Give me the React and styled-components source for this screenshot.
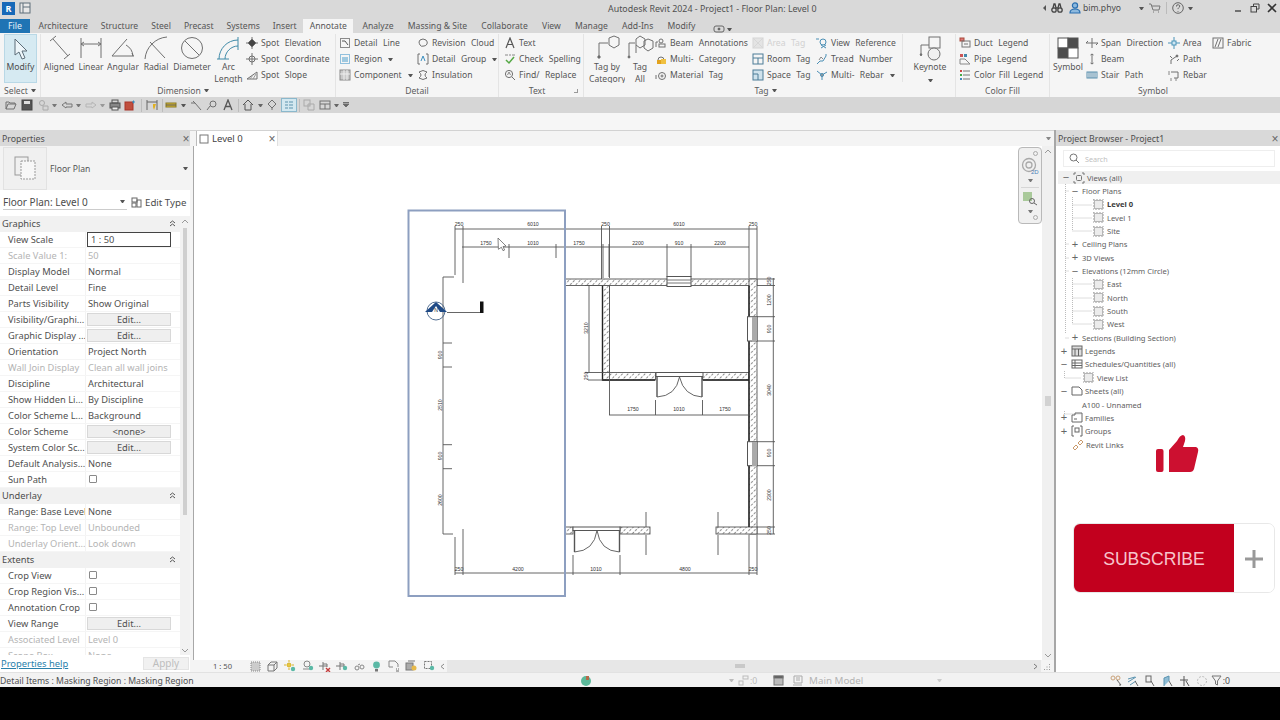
import React from 'react';
import styled, { createGlobalStyle } from 'styled-components';

const GlobalStyle = createGlobalStyle`
  html, body { margin: 0; padding: 0; background: #000; overflow: hidden; }
  * { box-sizing: border-box; }
`;

const Page = styled.div`
  width: 1280px;
  height: 720px;
  display: flex;
  flex-direction: column;
  overflow: hidden;
  font-family: "Noto Sans", "Open Sans", sans-serif;
  font-size: 10px;
  color: #4c4c4c;
  background: #000;
`;

// fixed width cell for the icon strips
const Slot = styled.span`
  flex: 0 0 ${p => p.$w}px;
  width: ${p => p.$w}px;
  display: flex;
  align-items: center;
  justify-content: ${p => p.$left ? 'flex-start' : 'center'};
  white-space: nowrap;
  color: ${p => p.$color || 'inherit'};
  font-size: ${p => p.$fs ? `${p.$fs}px` : 'inherit'};
`;

const Caret = styled.span`
  display: inline-block;
  flex: 0 0 auto;
  width: 5px;
  height: 3px;
  margin-left: ${p => p.$ml ?? 3}px;
  border-left: 2.5px solid transparent;
  border-right: 2.5px solid transparent;
  border-top: 3px solid ${p => p.$color || '#555'};
`;

/* title bar */
const TitleBar = styled.div`
  height: 16px;
  background: #d9d9d9;
  display: flex;
  align-items: center;
`;
const Logo = styled.span`
  width: 13px;
  height: 13px;
  margin-left: 2px;
  background: #1769b8;
  color: #fff;
  font-size: 9px;
  font-weight: 700;
  line-height: 13px;
  text-align: center;
`;
const TitleLeft = styled.div`
  flex: 0 0 608px;
  display: flex;
  align-items: center;
  gap: 4px;
`;
const TitleText = styled.div`
  flex: 0 0 432px;
  font-size: 8.9px;
  color: #505050;
`;

/* tabs */
const TabBar = styled.div`
  height: 17px;
  background: #d9d9d9;
  display: flex;
  align-items: flex-end;
`;
const FileTab = styled.div`
  width: 30px;
  height: 14px;
  margin-right: 2px;
  background: #1f74b4;
  color: #e8f2fa;
  text-align: center;
  line-height: 14px;
  font-size: 8.8px;
`;
const Tab = styled.div`
  height: 14px;
  padding: 0 ${p => p.$wide ? 7.1 : 6.5}px;
  margin-right: ${p => p.$active ? 2 : 0}px;
  line-height: 14px;
  font-size: 8.6px;
  white-space: nowrap;
  background: ${p => p.$active ? '#f5f5f5' : 'transparent'};
  color: #555;
`;

/* ribbon */
const Ribbon = styled.div`
  height: 64px;
  background: #f5f5f5;
  display: flex;
  padding-top: 1px;
  font-size: 8.6px;
  word-spacing: 3.2px;
`;
const Panel = styled.div`
  flex: 0 0 ${p => p.$w}px;
  display: flex;
  flex-direction: column;
  border-right: ${p => p.$last ? 'none' : '1px solid #e4e4e4'};
`;
const PanelBody = styled.div`
  height: 50px;
  display: flex;
  padding-left: ${p => p.$pl || 0}px;
`;
const PanelLabel = styled.div`
  height: 13px;
  display: flex;
  align-items: center;
  justify-content: center;
  padding-right: ${p => p.$pr || 0}px;
  color: #5c5c5c;
  word-spacing: 0;
  position: relative;
`;
const Launcher = styled.span`
  position: absolute;
  right: 5px;
  top: 5px;
  width: 4px;
  height: 4px;
  border-right: 1px solid #999;
  border-bottom: 1px solid #999;
`;
const ModifyButton = styled.div`
  width: 33px;
  height: 49px;
  margin-left: 4px;
  background: #d6eaf2;
  border: 1px solid #b9d8e6;
  display: flex;
  flex-direction: column;
  align-items: center;
  padding-top: 2px;
`;
const BigIcon = styled.div`
  height: 27px;
  display: flex;
  align-items: center;
  justify-content: center;
`;
const BigButton = styled.div`
  flex: 0 0 ${p => p.$w}px;
  height: 49px;
  overflow: hidden;
  text-align: center;
  line-height: 12px;
  color: #555;
  word-spacing: 0;
`;
const SmallCol = styled.div`
  flex: 0 0 ${p => p.$w}px;
  display: flex;
  flex-direction: column;
  padding-top: 1px;
`;
const SmallTool = styled.div`
  height: 16px;
  display: flex;
  align-items: center;
  gap: 3px;
  white-space: nowrap;
  color: ${p => p.$off ? '#c9c9c9' : '#555'};
  opacity: ${p => p.$off ? 0.8 : 1};
  word-spacing: ${p => p.$tight ? '1px' : 'inherit'};
`;
const Divider = styled.div`
  width: 1px;
  height: 48px;
  background: #e4e4e4;
  margin: 0 2px;
`;

/* quick access toolbar */
const Qat = styled.div`
  height: 16px;
  background: #d6d6d6;
  display: flex;
  align-items: center;
`;
const QatItem = styled.span`
  flex: 0 0 auto;
  width: ${p => p.$w}px;
  height: 14px;
  margin-left: ${p => p.$ml}px;
  display: flex;
  align-items: center;
  justify-content: center;
  background: ${p => p.$active ? '#d3e8f0' : 'transparent'};
  border: ${p => p.$active ? '1px solid #8bb8cc' : 'none'};
`;
const QatSep = styled.span`
  flex: 0 0 1px;
  height: 13px;
  background: #bdbdbd;
  margin-left: ${p => p.$ml}px;
`;
const Band = styled.div`
  height: 17px;
  background: #f6f6f6;
`;

/* main area */
const Main = styled.div`
  height: 542px;
  display: flex;
  background: #fff;
`;
const PanelHeader = styled.div`
  height: 16px;
  background: #d9d9d9;
  display: flex;
  align-items: center;
  justify-content: space-between;
  padding: 1px 0 0 2px;
  font-size: 8.8px;
  color: #4e4e4e;
`;
const CloseX = styled.span`
  font-family: "Liberation Sans", sans-serif;
  font-size: 12px;
  line-height: 12px;
  color: #666;
  width: 10px;
  text-align: center;
  margin-right: ${p => p.$mr || 0}px;
`;

/* properties */
const Properties = styled.aside`
  flex: 0 0 190px;
  display: flex;
  flex-direction: column;
  background: #fff;
`;
const TypeBox = styled.div`
  height: 44px;
  background: #f3f3f3;
  display: flex;
  align-items: center;
  color: #555;
  padding-right: 2px;
`;
const Thumb = styled.div`
  width: 44px;
  height: 43px;
  margin: 0 3px;
  background: #f0f0f0;
  border: 1px solid #e2e2e2;
  display: flex;
  align-items: center;
  justify-content: center;
`;
const TypeName = styled.span`
  flex: 1;
  padding-top: 2px;
  font-size: 8.6px;
`;
const SelectorRow = styled.div`
  height: 20px;
  display: flex;
  padding: 2px 0 0 3px;
`;
const SelectorField = styled.div`
  width: 124px;
  height: 18px;
  padding: 2px 2px 0 0;
  border-bottom: 1px solid #ccc;
  display: flex;
  align-items: center;
  justify-content: space-between;
  font-size: 10px;
`;
const EditType = styled.div`
  display: flex;
  align-items: center;
  gap: 3px;
  margin-left: 4px;
  padding-top: 2px;
  font-size: 9.7px;
`;
const ListWrap = styled.div`
  margin-top: 6px;
  height: 439px;
  display: flex;
  overflow: hidden;
`;
const PropList = styled.div`
  width: 180px;
  overflow: hidden;
`;
const SectionRow = styled.div`
  height: 16px;
  background: #f1f1f1;
  display: flex;
  align-items: center;
  justify-content: space-between;
  padding: 0 4px 1px 2px;
  font-size: 9.3px;
`;
const PropRow = styled.div`
  height: 16px;
  display: grid;
  grid-template-columns: 86px 94px;
  border-bottom: 1px solid #f5f5f5;
  font-size: 9.3px;
  color: ${p => p.$off ? '#b4b4b4' : '#505050'};
`;
const PropLabel = styled.div`
  padding-left: 8px;
  line-height: 15px;
  white-space: nowrap;
  overflow: hidden;
  border-right: 1px solid #f3f3f3;
`;
const PropValue = styled.div`
  padding-left: 2px;
  line-height: 15px;
  white-space: nowrap;
`;
const ScaleInput = styled.div`
  width: 84px;
  height: 15px;
  margin-left: -1px;
  border: 1px solid #444;
  border-right-width: 1.5px;
  line-height: 13px;
  padding-left: 3px;
`;
const EditButton = styled.div`
  width: 84px;
  height: 13px;
  margin: 1px 0 0 -1px;
  background: #efefef;
  border: 1px solid #d8d8d8;
  line-height: 11px;
  text-align: center;
`;
const Check = styled.span`
  display: block;
  width: 8px;
  height: 8px;
  margin: 3px 0 0 1px;
  border: 1px solid #8a8a8a;
  border-radius: 1px;
  background: #fff;
`;
const PropScroll = styled.div`
  width: 10px;
  background: #f2f2f2;
  display: flex;
  flex-direction: column;
  align-items: center;
`;
const ScrollArrow = styled.span`
  flex: 0 0 auto;
  margin-top: ${p => p.$end ? 'auto' : '0'};
  height: 10px;
  display: flex;
  align-items: center;
`;
const PropThumb = styled.div`
  width: 4px;
  height: 287px;
  margin-top: 2px;
  background: #cfcfcf;
`;
const PropFooter = styled.div`
  height: 17px;
  display: flex;
  align-items: center;
  justify-content: space-between;
  padding: 0 1px;
`;
const HelpLink = styled.span`
  color: #2a81ab;
  text-decoration: underline;
  font-size: 9.4px;
`;
const ApplyButton = styled.div`
  width: 46px;
  height: 13px;
  background: #f1f1f1;
  border: 1px solid #e4e4e4;
  color: #bdbdbd;
  text-align: center;
  line-height: 11px;
  font-size: 10px;
`;

/* view */
const ViewArea = styled.section`
  flex: 0 0 864px;
  display: flex;
  flex-direction: column;
  background: #f4f4f4;
`;
const ViewTabs = styled.div`
  height: 16px;
  display: flex;
  align-items: flex-end;
  justify-content: space-between;
  padding: 0 3px 0 6px;
  background: #f4f4f4;
  border-top: 1px solid #d2d2d2;
`;
const ViewTab = styled.div`
  width: 82px;
  height: 15px;
  background: #fff;
  border-left: 1px solid #bbb;
  border-right: 1px solid #e0e0e0;
  display: flex;
  align-items: center;
  gap: 3px;
  padding-left: 2px;
  font-size: 9.5px;
  color: #3f3f3f;
  span:last-child { margin-left: auto; }
`;
const TabCaretWrap = styled.span`
  align-self: center;
  display: flex;
`;
const CanvasRow = styled.div`
  height: 514px;
  display: flex;
  padding-left: 3px;
`;
const Canvas = styled.div`
  position: relative;
  width: 849px;
  height: 514px;
  background: #fff;
  border-left: 1px solid #a8a8a8;
  svg.plan { display: block; }
`;
const NavBar = styled.div`
  position: absolute;
  right: 0;
  top: 1px;
  width: 24px;
  height: 77px;
  background: #f0f0f0;
  border: 1px solid #b9b9b9;
  border-radius: 4px;
  display: flex;
  flex-direction: column;
  align-items: center;
  padding-top: 9px;
`;
const NavRule = styled.div`
  width: 18px;
  height: 1px;
  background: #d6d6d6;
  margin: 2px 0 3px;
`;
const NavDots = styled.span`
  position: absolute;
  right: 3px;
  ${p => p.$bottom ? 'bottom: 3px;' : 'top: 3px;'}
  width: 5px;
  height: 5px;
  border: 1px solid #aaa;
  border-radius: 50%;
`;
const VScroll = styled.div`
  width: 12px;
  background: #f0f0f0;
  display: flex;
  flex-direction: column;
  align-items: center;
`;
const VThumb = styled.div`
  width: 6px;
  height: 10px;
  margin-top: 240px;
  background: #d2d2d2;
`;
const ControlBar = styled.div`
  height: 12px;
  padding-left: 3px;
  display: flex;
  align-items: center;
  background: #f4f4f4;
  font-size: 7.6px;
  color: #555;
`;
const ScaleText = styled.span`
  flex: 0 0 54px;
  padding-left: 20px;
  white-space: nowrap;
`;
const HScroll = styled.div`
  width: 594px;
  height: 12px;
  background: #e7e7e7;
  display: flex;
  align-items: center;
  justify-content: space-between;
  padding-right: 3px;
`;
const HThumb = styled.div`
  width: 10px;
  height: 4px;
  margin-left: 288px;
  background: #c9c9c9;
`;

/* project browser */
const Browser = styled.aside`
  flex: 0 0 226px;
  position: relative;
  background: #fff;
  border-left: 2px solid #a7a7a7;
`;
const SearchBox = styled.div`
  height: 17px;
  margin: 4px 5px 4px 7px;
  border: 1px solid #eeeeee;
  display: flex;
  align-items: center;
  gap: 5px;
  padding-left: 5px;
  color: #c0c0c0;
  font-size: 7.2px;
`;
const Tree = styled.div`
  position: relative;
`;
const TreeLines = styled.svg`
  position: absolute;
  left: 0;
  top: 0;
`;
const TreeRow = styled.div`
  position: relative;
  height: 13.35px;
  display: flex;
  align-items: center;
  padding-left: ${p => p.$pad}px;
  margin-left: ${p => p.$hl ? 2 : 0}px;
  background: ${p => p.$hl ? '#f0f0f0' : 'transparent'};
  font-size: 7.6px;
  font-weight: ${p => p.$bold ? 700 : 400};
  color: ${p => p.$bold ? '#3c3c3c' : '#5e5e5e'};
  white-space: nowrap;
`;
const Toggle = styled.span`
  flex: 0 0 8px;
  margin-right: 3px;
  font-family: "Liberation Sans", sans-serif;
  font-size: 11px;
  line-height: 11px;
  text-align: center;
  color: #666;
`;
const TreeIcon = styled.span`
  flex: 0 0 ${p => p.$w || 12}px;
  margin-right: ${p => p.$mr ?? 2}px;
  display: flex;
  align-items: center;
`;
const ThumbsUp = styled.svg`
  position: absolute;
  left: 100px;
  top: 305px;
`;
const Subscribe = styled.div`
  position: absolute;
  left: 17px;
  top: 393px;
  width: 202px;
  height: 70px;
  display: flex;
  border-radius: 7px;
  overflow: hidden;
  border: 1px solid #e8e8e8;
`;
const SubscribeLabel = styled.div`
  flex: 0 0 160px;
  padding-top: 3px;
  background: #c2001e;
  color: #f7c4cc;
  font-family: "Liberation Sans", sans-serif;
  font-size: 17.6px;
  display: flex;
  align-items: center;
  justify-content: center;
`;
const SubscribePlus = styled.div`
  flex: 1;
  padding-top: 2px;
  background: #fff;
  display: flex;
  align-items: center;
  justify-content: center;
`;

/* status */
const StatusBar = styled.footer`
  height: 15px;
  padding-top: 1px;
  background: #f2f2f2;
  border-top: 1px solid #e2e2e2;
  display: flex;
  align-items: center;
  font-size: 8.7px;
  color: #505050;
`;
const BlackBar = styled.div`
  height: 33px;
  background: #000;
`;

const Ico = ({ w = 12, h, vb, children, stroke = '#707070', sw = 1 }) => (
  <svg width={w} height={h || w} viewBox={vb || `0 0 ${w} ${h || w}`} fill="none" stroke={stroke} strokeWidth={sw} style={{ flex: 'none' }}>{children}</svg>
);

const icons = {
  spotElev: <Ico><path d="M0 6h12M6 0v12" /><path d="M6 2l4 4-4 4-4-4z" fill="#444" /></Ico>,
  spotCoord: <Ico><circle cx="6" cy="6" r="3" /><path d="M0 6h12M6 0v12" /></Ico>,
  spotSlope: <Ico><path d="M1 10L11 3v7z" /><path d="M4 10l3-4M7 10l3-5" stroke="#999" /></Ico>,
  detailLine: <Ico stroke="#8a8a8a"><rect x="1.5" y="1.5" width="9" height="9" /><path d="M3 4h3l3 4" stroke="#555" /></Ico>,
  region: <Ico stroke="#2c8bc4"><rect x="1.5" y="1.5" width="9" height="9" strokeDasharray="1 1" /><rect x="3" y="4" width="6" height="5" fill="#9fc9e0" stroke="none" /></Ico>,
  component: <Ico stroke="#888"><rect x="1" y="1" width="10" height="10" fill="#c9c9c9" /><path d="M1 5h10M5 1v10M8 1v10" stroke="#eee" /></Ico>,
  cloud: <Ico><path d="M3 3q3-2 6 0 2 2 1 4t-3 2q-3 1-4-1t-1-3z" /></Ico>,
  group: <Ico><path d="M3 1H1v10h2M9 1h2v10H9" /><path d="M4 8l2-5 2 5" stroke="#3b8fc0" /></Ico>,
  insulation: <Ico><path d="M2 3q4-3 8 0-4 3 0 6-4 3-8 0 4-3 0-6z" /></Ico>,
  textA: <Ico stroke="#555" sw="1.2"><path d="M2 11L6 1l4 10M3.5 7.5h5" /></Ico>,
  spelling: <Ico stroke="#55a845" sw="1.5"><path d="M2 7l3 3 5-6" /><path d="M1 2h3M5 2h2M8 2h3" stroke="#888" strokeWidth="1" /></Ico>,
  find: <Ico><circle cx="5" cy="5" r="3.6" /><path d="M8 8l3 3" /><path d="M3.5 6L5 3l1.5 3" stroke="#888" /></Ico>,
  beam: <Ico><path d="M1 10V5M1 5l2 0" /><circle cx="6" cy="4" r="2" /><rect x="4" y="7" width="6" height="3" /></Ico>,
  multi: <Ico><path d="M3 7a3 3 0 016 0" /><rect x="2" y="7" width="4" height="4" fill="#e2a21d" stroke="none" /><rect x="6" y="6" width="5" height="5" fill="#f0c040" stroke="none" /></Ico>,
  material: <Ico><path d="M1 10V6" /><circle cx="7" cy="7" r="3.5" /><circle cx="7" cy="7" r="1" /></Ico>,
  area: <Ico stroke="#d0d0d0"><rect x="1" y="1" width="10" height="10" fill="#e0e0e0" /><path d="M1 1l10 10M11 1L1 11" /></Ico>,
  room: <Ico stroke="#4c7d97"><rect x="1" y="1" width="10" height="10" /><path d="M1 5h10M6 5v6" /></Ico>,
  space: <Ico stroke="#4c7d97"><rect x="1" y="1" width="10" height="10" fill="#cfe2ec" /><path d="M1 5h5v6" /></Ico>,
  view: <Ico stroke="#4b8fb5"><circle cx="7" cy="5" r="3" /><path d="M0 2h3M5 8l5 3M10 8l-5 3" /></Ico>,
  tread: <Ico stroke="#4b8fb5"><path d="M1 11l3-3h3l3-5V1" /><path d="M3 7l2-3 2 2" stroke="#888" /></Ico>,
  rebar: <Ico stroke="#4b8fb5"><path d="M1 2l5 4 5-3M6 6v5" /><circle cx="6" cy="6" r="1.5" fill="#999" /></Ico>,
  duct: <Ico stroke="#a94a3b"><rect x="1" y="1" width="4" height="3" fill="#d77" /><rect x="3" y="4" width="8" height="6" stroke="#777" /><path d="M5 7h4" stroke="#777" /></Ico>,
  pipe: <Ico stroke="#888"><rect x="1" y="1" width="3" height="3" fill="#c55" stroke="none" /><rect x="5" y="1" width="3" height="3" fill="#48a" stroke="none" /><path d="M1 11V6l5 0 5 5z" /></Ico>,
  colorFill: <Ico stroke="#777"><rect x="1" y="1" width="2" height="2" fill="#c44" stroke="none" /><rect x="1" y="5" width="2" height="2" fill="#4a4" stroke="none" /><rect x="1" y="9" width="2" height="2" fill="#48b" stroke="none" /><path d="M4 2h7M4 6h7M4 10h7" /></Ico>,
  span: <Ico><path d="M0 6h12M6 1v10M0 6l2-2M12 6l-2 2" /></Ico>,
  beamSym: <Ico><path d="M6 1v10M4.5 2L6 1l1.5 1M4.5 10L6 11l1.5-1" /></Ico>,
  stair: <Ico stroke="#5a8fae"><rect x="1" y="3" width="10" height="6" /><path d="M3 3v6M5 3v6M7 3v6M9 3v6" /></Ico>,
  areaSym: <Ico stroke="#4a93b8"><path d="M0 6h12M6 0v12" /><rect x="4" y="4" width="4" height="4" fill="#cfe6f2" /></Ico>,
  path: <Ico><path d="M3 11V7l6-4M2 3l2 2M9 8l2-2" /><circle cx="9" cy="3" r="1" fill="#666" /></Ico>,
  rebarSym: <Ico><path d="M3 3h7v6H6" /><path d="M1 2v4M3 9v3M8 9v3" stroke="#888" /></Ico>,
  fabric: <Ico><rect x="1" y="1" width="10" height="10" /><path d="M3 10l3-8M6 10l3-8" /></Ico>,
};

const Tool = ({ icon, label, off, caret, tight }) => (
  <SmallTool $off={off} $tight={tight}>
    {icons[icon]}
    <span>{label}</span>
    {caret && <Caret />}
  </SmallTool>
);

const bigIcons = {
  aligned: <Ico w={26} h={26}><path d="M4 6L10 1M18 24l6-5M7 4l15 17" /></Ico>,
  linear: <Ico w={24} h={24}><path d="M2 2v20M22 2v20M2 8h20M2 8l3-2M2 8l3 2M22 8l-3-2M22 8l-3 2" /></Ico>,
  angular: <Ico w={24} h={24}><path d="M1 20h22M1 20L16 3M15 9a14 14 0 017 11" /><path d="M22 20l-1-3" /></Ico>,
  radial: <Ico w={26} h={26}><path d="M2 24A24 24 0 0124 2M7 7l15 16" /></Ico>,
  diameter: <Ico w={24} h={24}><circle cx="12" cy="12" r="10.5" /><path d="M5 5l14 14" /></Ico>,
  arc: <Ico w={26} h={24}><path d="M3 23c0-10 8-19 19-19M9 23c0-7 6-13 13-13M22 1v13" stroke="#3f8aa8" /><path d="M1 23h12" stroke="#3f8aa8" /></Ico>,
  tagCat: <Ico w={28} h={26}><path d="M6 22V8h9" /><circle cx="6" cy="22" r="1.2" fill="#666" /><path d="M16 3l5-2 5 2v7l-5 3-5-3z" /></Ico>,
  tagAll: <Ico w={28} h={26}><path d="M3 22V8h6M10 18V10" /><circle cx="3" cy="22" r="1" fill="#666" /><path d="M10 4l4-3 5 3v6l-5 3-4-3z" /><path d="M18 6l4-2 5 2v7l-5 3-4-3z" /></Ico>,
  keynote: <Ico w={26} h={26}><path d="M4 20V10h8" /><path d="M4 21l-1-2h2z" fill="#666" /><rect x="12" y="2" width="11" height="11" /><circle cx="17" cy="19" r="6" fill="#f0f0f0" /></Ico>,
  symbol: <Ico w={26} h={26} stroke="#555"><rect x="3" y="3" width="10" height="10" fill="#fff" /><rect x="13" y="3" width="10" height="10" fill="#4d4d4d" /><rect x="3" y="13" width="10" height="10" fill="#4d4d4d" /><rect x="13" y="13" width="10" height="10" fill="#fff" /></Ico>,
};

const Big = ({ w, icon, children }) => (
  <BigButton $w={w}>
    <BigIcon>{bigIcons[icon]}</BigIcon>
    {children}
  </BigButton>
);

const tabs = ['Architecture', 'Structure', 'Steel', 'Precast', 'Systems', 'Insert', 'Annotate', 'Analyze', 'Massing & Site', 'Collaborate', 'View', 'Manage', 'Add-Ins', 'Modify'];

// c is the centre of the item along the toolbar, from the left of the window
const qat = [
  { c: 10.5, i: <Ico><path d="M1 10V3h3l1 1h5v1M1 10l2-5h8l-2 5z" /></Ico> },
  { c: 27, i: <Ico stroke="#444"><rect x="1" y="1" width="10" height="10" fill="#555" /><rect x="3" y="2" width="6" height="3" fill="#ddd" stroke="none" /></Ico> },
  { c: 44, i: <Ico stroke="#aaa"><circle cx="4" cy="4" r="2.5" /><path d="M5 7h5v4H5z" /></Ico> },
  { c: 54, caret: '#777' },
  { c: 67, i: <Ico stroke="#777"><path d="M1 6l4-3v2h6v3H5v1z" /></Ico> },
  { c: 78, caret: '#777' },
  { c: 90.5, i: <Ico stroke="#b5b5b5"><path d="M11 6L7 3v2H1v3h6v1z" /></Ico> },
  { c: 102.5, caret: '#999' },
  { c: 114.5, i: <Ico stroke="#555"><rect x="1" y="4" width="10" height="5" fill="#888" /><rect x="3" y="1" width="6" height="3" /><rect x="3" y="8" width="6" height="3" fill="#eee" /></Ico> },
  { c: 130, i: <Ico stroke="#a9342a"><rect x="1" y="3" width="8" height="8" fill="#c0503f" /><path d="M8 3h3M9.5 1.5v3" stroke="#3a8fc0" /></Ico> },
  { c: 141, sep: true },
  { c: 152, i: <Ico stroke="#666"><path d="M1 1v10M11 1v10M1 3h10" /><path d="M7 5h3l-1 3-1 3-1-3z" fill="#e0b020" stroke="none" /></Ico> },
  { c: 162, sep: true },
  { c: 171, i: <Ico stroke="#8a7a20"><rect x="1" y="4" width="10" height="4" fill="#d9b93a" /><path d="M1 6h10" stroke="#555" /></Ico> },
  { c: 183, caret: '#555' },
  { c: 196, i: <Ico><path d="M1 4l4 0 6 7M3 2l2 2" /></Ico> },
  { c: 212, i: <Ico><circle cx="7" cy="5" r="3" /><path d="M1 11l3-4" /></Ico> },
  { c: 228, i: <Ico stroke="#555" sw="1.3"><path d="M2 11L6 1l4 10M3.5 7.5h5" /></Ico> },
  { c: 238, sep: true },
  { c: 248, i: <Ico stroke="#555"><path d="M1 6l5-5 5 5M3 5v6h6V5" /></Ico> },
  { c: 260, caret: '#666' },
  { c: 272, i: <Ico><path d="M6 1l4 4-4 4-4-4zM6 9v2" /></Ico> },
  { c: 289, active: true, i: <Ico w={10} stroke="#5c93ad"><path d="M1 2h3M1 5h3M1 8h3M5 2h4M5 5h4M5 8h4" /></Ico> },
  { c: 299, sep: true },
  { c: 309, i: <Ico stroke="#aaa"><rect x="1" y="1" width="6" height="6" /><path d="M5 5h6v6H5z" /></Ico> },
  { c: 325, i: <Ico><rect x="1" y="2" width="10" height="8" /><path d="M1 5h10M6 5v5" /></Ico> },
  { c: 336, caret: '#666' },
  { c: 346, i: <Ico w={8}><path d="M1 1.5h6" /><path d="M1 3l3 3 3-3z" fill="#666" /></Ico> },
];

const qatWidth = q => (q.sep ? 1 : q.caret ? 5 : q.active ? 16 : 12);
const qatOffset = idx => {
  const q = qat[idx];
  if (idx === 0) return q.c - qatWidth(q) / 2;
  const prev = qat[idx - 1];
  return (q.c - qatWidth(q) / 2) - (prev.c + qatWidth(prev) / 2);
};

const sections = [
  { title: 'Graphics', rows: [
    ['View Scale', '1 : 50', 'input'],
    ['Scale Value    1:', '50', 'off'],
    ['Display Model', 'Normal'],
    ['Detail Level', 'Fine'],
    ['Parts Visibility', 'Show Original'],
    ['Visibility/Graphi...', 'Edit...', 'btn'],
    ['Graphic Display ...', 'Edit...', 'btn'],
    ['Orientation', 'Project North'],
    ['Wall Join Display', 'Clean all wall joins', 'off'],
    ['Discipline', 'Architectural'],
    ['Show Hidden Li...', 'By Discipline'],
    ['Color Scheme L...', 'Background'],
    ['Color Scheme', '<none>', 'btn'],
    ['System Color Sc...', 'Edit...', 'btn'],
    ['Default Analysis...', 'None'],
    ['Sun Path', '', 'check'],
  ] },
  { title: 'Underlay', rows: [
    ['Range: Base Level', 'None'],
    ['Range: Top Level', 'Unbounded', 'off'],
    ['Underlay Orient...', 'Look down', 'off'],
  ] },
  { title: 'Extents', rows: [
    ['Crop View', '', 'check'],
    ['Crop Region Vis...', '', 'check'],
    ['Annotation Crop', '', 'check'],
    ['View Range', 'Edit...', 'btn'],
    ['Associated Level', 'Level 0', 'off'],
    ['Scope Box', 'None', 'off'],
  ] },
];

const CollapseMark = () => (
  <Ico w={7} h={7} stroke="#555"><path d="M1 3l2.5-2L6 3M1 6l2.5-2L6 6" /></Ico>
);

const ArrowUp = () => <Ico w={8} h={5} stroke="#999"><path d="M1 4l3-3 3 3" /></Ico>;
const ArrowDown = () => <Ico w={8} h={5} stroke="#999"><path d="M1 1l3 3 3-3" /></Ico>;

const PropValueCell = ({ kind, value }) => {
  if (kind === 'input') return <PropValue><ScaleInput>{value}</ScaleInput></PropValue>;
  if (kind === 'btn') return <PropValue><EditButton>{value}</EditButton></PropValue>;
  if (kind === 'check') return <PropValue><Check /></PropValue>;
  return <PropValue>{value}</PropValue>;
};

const treeViewIcon = (
  <Ico w={11} stroke="#777"><rect x="1.5" y="1.5" width="8" height="8" fill="#ececec" strokeDasharray="1 1" /><rect x="0.5" y="0.5" width="10" height="10" strokeDasharray="1 2" stroke="#999" /></Ico>
);

const treeRows = [
  { pad: 4, toggle: '−', icon: <Ico stroke="#777"><path d="M1 3V1h2M9 1h2v2M1 9v2h2M9 11h2V9" /><rect x="3.5" y="3.5" width="5" height="5" rx="1" /></Ico>, label: 'Views (all)', hl: true },
  { pad: 15, toggle: '−', label: 'Floor Plans' },
  { pad: 37, view: true, label: 'Level 0', bold: true },
  { pad: 37, view: true, label: 'Level 1' },
  { pad: 37, view: true, label: 'Site' },
  { pad: 15, toggle: '+', label: 'Ceiling Plans' },
  { pad: 15, toggle: '+', label: '3D Views' },
  { pad: 15, toggle: '−', label: 'Elevations (12mm Circle)' },
  { pad: 37, view: true, label: 'East' },
  { pad: 37, view: true, label: 'North' },
  { pad: 37, view: true, label: 'South' },
  { pad: 37, view: true, label: 'West' },
  { pad: 15, toggle: '+', label: 'Sections (Building Section)' },
  { pad: 4, toggle: '+', icon: <Ico stroke="#666"><rect x="1" y="1" width="10" height="10" fill="#ddd" /><path d="M1 4h10M4 4v7M7.5 4v7" /></Ico>, label: 'Legends' },
  { pad: 4, toggle: '−', icon: <Ico stroke="#666"><rect x="1" y="2" width="10" height="8" /><path d="M1 5h10M1 7.5h10M4 2v8" /></Ico>, label: 'Schedules/Quantities (all)' },
  { pad: 27, view: true, label: 'View List' },
  { pad: 4, toggle: '−', icon: <Ico stroke="#666"><path d="M1 2h7l3 3v5H1z" /></Ico>, label: 'Sheets (all)' },
  { pad: 26, label: 'A100 - Unnamed' },
  { pad: 4, toggle: '+', icon: <Ico stroke="#666"><path d="M1 10V3h3V1h7v9z" /><path d="M3 7h3" /></Ico>, label: 'Families' },
  { pad: 4, toggle: '+', icon: <Ico stroke="#666"><path d="M3 1H1v10h2M9 1h2v10H9" /><rect x="4" y="3" width="4" height="4" /></Ico>, label: 'Groups' },
  { pad: 16, icon: <Ico stroke="#c99a6c"><path d="M1 9l3-3 2 2-3 3zM6 4l3-3 2 2-3 3z" /></Ico>, label: 'Revit Links' },
];

const viewBarIcons = [
  <Ico w={11} stroke="#888"><rect x="1" y="1" width="9" height="9" fill="#ccc" strokeDasharray="1 1" /></Ico>,
  <Ico w={11} stroke="#777"><path d="M1 4h6v6H1zM1 4l3-3h6v6l-3 3M7 4l3-3" /></Ico>,
  <Ico w={12} stroke="#d8b22a"><circle cx="5" cy="5" r="2" fill="#e8c840" /><path d="M5 0v2M5 8v2M0 5h2M8 5h2" /><circle cx="9" cy="9" r="2.2" fill="#5bb9a6" stroke="none" /></Ico>,
  <Ico w={12} stroke="#888"><circle cx="5" cy="4" r="3" /><path d="M1 9h7" /><circle cx="9" cy="8" r="2.2" fill="#5bb9a6" stroke="none" /></Ico>,
  <Ico w={12} stroke="#777"><path d="M0 6h8M4 2v8M4 4h4v3" /><path d="M7 8l4 4M11 8l-4 4" stroke="#c43c3c" strokeWidth="1.4" /></Ico>,
  <Ico w={12} stroke="#777"><path d="M0 6h8M4 2v8M4 4h4v3" /><circle cx="9" cy="8" r="2.2" fill="#5bb9a6" stroke="none" /></Ico>,
  <Ico w={11} stroke="#888"><circle cx="3" cy="7" r="2" /><circle cx="8" cy="6" r="2" /><path d="M4 4l2-1" /></Ico>,
  <Ico w={11} stroke="none"><circle cx="5.5" cy="4" r="3.4" fill="#5bb9a6" /><rect x="4" y="8" width="3" height="2.5" fill="#777" /></Ico>,
  <Ico w={12} stroke="#888"><path d="M1 1h6l3 3v3M1 1v6h4" /><path d="M8 9h1M10 9h1M8 11h3" stroke="#666" /></Ico>,
  <Ico w={12} stroke="#777"><rect x="1" y="3" width="7" height="7" fill="#aaa" /><path d="M3 1h7" /><circle cx="9" cy="8" r="2.5" fill="#e6b94a" stroke="none" /></Ico>,
  <Ico w={12} stroke="#777"><rect x="1.5" y="1.5" width="7" height="7" strokeDasharray="2 1" /><circle cx="9" cy="8" r="2.2" fill="#5bb9a6" stroke="none" /></Ico>,
];

const selectIcons = [
  <Ico stroke="#c9a27a"><circle cx="3" cy="3" r="2" /><circle cx="8" cy="3" r="2" /><path d="M7 5l4 5-2 0" stroke="#666" /></Ico>,
  <Ico stroke="#5a93b0"><path d="M1 7l8-5M1 4l7-2M3 10l6-4" /><path d="M8 6l3 5" stroke="#666" /></Ico>,
  <Ico stroke="#666"><rect x="2" y="1" width="5" height="6" /><path d="M7 6l3 5" /></Ico>,
  <Ico stroke="#5a93b0"><path d="M2 11V3l5-2v5" fill="#8fbcd4" /><path d="M7 6l3 5" stroke="#666" /></Ico>,
  <Ico stroke="#555"><path d="M5 1v10M1 5h8" /><path d="M7 6l3 5" /></Ico>,
  <Ico stroke="#bbb"><circle cx="6" cy="6" r="4.5" strokeDasharray="2 1.5" /></Ico>,
];

/* --- drawing of the plan --- */
const Dim = ({ x, y, r, children }) => (
  <text x={x} y={y} fontSize="5.2" fontFamily="Liberation Sans, sans-serif" fill="#333" stroke="none" textAnchor="middle" transform={r ? `rotate(-90 ${x} ${y})` : undefined}>{children}</text>
);

const Lines = ({ d, color = '#555', w = 0.9 }) => <path d={d} stroke={color} strokeWidth={w} fill="none" />;

const Wall = ({ x, y, w, h }) => (
  <rect x={x} y={y} width={w} height={h} fill="url(#wallHatch)" stroke="#555" strokeWidth="0.9" />
);

const PlanDrawing = () => (
  <svg className="plan" width="848" height="514" viewBox="194 146 848 514">
    <defs>
      <pattern id="wallHatch" width="4" height="4" patternUnits="userSpaceOnUse" patternTransform="rotate(45)">
        <rect width="4" height="4" fill="#fff" />
        <rect width="1" height="2.4" fill="#8a8a8a" />
      </pattern>
    </defs>

    {/* top dimension strings */}
    <Lines d="M455 229H757M455 226v49M463 226v57M601.5 226v54M609.5 226v52M749 226v52M757 226v52" />
    <Lines d="M462 247H749M509 244v14M556 244v14M603 244v34M667 244v33M691 244v33M609 244v33" />
    <Dim x="459" y="226">250</Dim><Dim x="533" y="226">6010</Dim><Dim x="605.5" y="226">250</Dim><Dim x="679" y="226">6010</Dim><Dim x="753" y="226">250</Dim>
    <Dim x="486" y="245">1750</Dim><Dim x="533" y="245">1010</Dim><Dim x="579" y="245">1750</Dim><Dim x="638" y="245">2200</Dim><Dim x="679" y="245">910</Dim><Dim x="720" y="245">2200</Dim>

    {/* left dimension string */}
    <Lines d="M443 277V534M443 277h11M443 343h9M443 367h9M443 444.7h9M443 468.7h9M443 534h10" />
    <Dim x="442" y="355" r>910</Dim><Dim x="442" y="405" r>2510</Dim><Dim x="442" y="456" r>910</Dim><Dim x="442" y="500" r>2600</Dim>

    {/* walls */}
    <Wall x={565} y={279} w={192} h={6.5} />
    <Wall x={602.5} y={285.5} w={7} h={94.5} />
    <Wall x={602.5} y={372.5} w={53} h={7.5} />
    <Wall x={702.5} y={372.5} w={46.5} h={7.5} />
    <Wall x={749} y={279} w={8} h={255} />
    <Wall x={565} y={527} w={8} h={7} />
    <Wall x={620} y={527} w={30} h={7} />
    <Wall x={716} y={527} w={41} h={7} />
    <Lines d="M602.5 285.5V380H655M703 380H749M749 285.5V527" color="#222" w="1.4" />

    {/* windows */}
    <rect x="667" y="276.5" width="24" height="10" fill="#fff" stroke="#555" />
    <Lines d="M667 280h24M667 283h24" color="#666" />
    <rect x="747.5" y="316.7" width="9.5" height="24.3" fill="#fff" stroke="#555" />
    <rect x="752" y="317" width="5" height="24" fill="#aaa" />
    <rect x="747.5" y="441.7" width="9.5" height="24" fill="#fff" stroke="#555" />
    <rect x="752" y="442" width="5" height="24" fill="#aaa" />

    {/* doors */}
    <rect x="656" y="372.5" width="47" height="4" fill="#fff" stroke="#555" />
    <Lines d="M657 376.5V397M702 376.5V397" color="#555" w="1.4" />
    <Lines d="M657 397Q676 396 679.5 377M702 397Q684 396 679.5 377" />
    <rect x="573" y="527" width="47" height="3.5" fill="#fff" stroke="#555" />
    <Lines d="M574.5 530.5V552M619.5 530.5V552" color="#555" w="1.4" />
    <Lines d="M574.5 552Q594 551 597 530.5M619.5 552Q600 551 597 530.5" />

    {/* right dimension string */}
    <Lines d="M773.3 278V534M757 279h18M757 285.5h18M757 316.7h18M757 341h18M757 441.7h18M757 465.7h18M757 527h18M757 534h18" />
    <Dim x="771" y="281" r>250</Dim><Dim x="771" y="300" r>1200</Dim><Dim x="771" y="329" r>910</Dim><Dim x="771" y="390" r>3040</Dim><Dim x="771" y="453" r>910</Dim><Dim x="771" y="495" r>2300</Dim><Dim x="771" y="530.5" r>250</Dim>

    {/* interior dimensions */}
    <Lines d="M589 285V372.5M585 285.5h18M585 372.5h18M588 380h15" />
    <Dim x="588" y="328" r>3210</Dim><Dim x="588" y="376" r>250</Dim>
    <Lines d="M609.5 285V415M609 415H749M655.5 400v15M702.5 400v15" />
    <Dim x="633" y="411">1750</Dim><Dim x="679" y="411">1010</Dim><Dim x="725" y="411">1750</Dim>

    {/* bottom dimension string */}
    <Lines d="M455 537V575M463 529V575M455 573H757M573 555v20M620 555v20M749 535v40M757 535v40M646 512v15M646 535v20M718 512v15M718 535v20" />
    <Dim x="459" y="571">250</Dim><Dim x="518" y="571">4200</Dim><Dim x="596" y="571">1010</Dim><Dim x="685" y="571">4800</Dim><Dim x="753" y="571">250</Dim>

    {/* masking region being sketched */}
    <rect x="408.5" y="210.5" width="156.5" height="385.5" fill="none" stroke="#8d9fc0" strokeWidth="2" />
    <Lines d="M447 312.5H481" color="#666" w="1.2" />
    <rect x="480" y="301.5" width="3.5" height="11.5" fill="#111" />
    <circle cx="436" cy="311" r="9" fill="none" stroke="#3f5f86" strokeWidth="0.9" />
    <path d="M425 312L436 302L447 312Z" fill="#1f4a86" />
    <path d="M432 312h8l-4-6z" fill="#fff" />
    <Dim x="436" y="312">N</Dim>

    {/* mouse pointer */}
    <path d="M498 238l8 8-3 .6 1.6 3.4-1.6.7-1.6-3.4-3 2z" fill="#fff" stroke="#666" strokeWidth="0.8" />
  </svg>
);

export default function App() {
  const annotateAt = tabs.indexOf('Annotate');
  return (
    <Page>
      <GlobalStyle />
      <TitleBar>
        <TitleLeft>
          <Logo>R</Logo>
          <Ico stroke="#5f6f7a"><rect x="1" y="1" width="10" height="10" fill="#e8e8e8" /><path d="M4 1v10M4 5h7" /></Ico>
        </TitleLeft>
        <TitleText>Autodesk Revit 2024 - Project1 - Floor Plan: Level 0</TitleText>
        <Slot $w={8}><svg width="3" height="6"><path d="M3 0v6L0 3z" fill="#555" /></svg></Slot>
        <Slot $w={18}><Ico stroke="#444" sw="1.3"><circle cx="3" cy="8" r="2.2" /><circle cx="9" cy="8" r="2.2" /><path d="M2 6l1-4h1l1 4h2l1-4h1l1 4" /></Ico></Slot>
        <Slot $w={17}><Ico stroke="#2a6fb0" sw="1.2"><circle cx="6" cy="3.5" r="2.6" fill="#8db9de" /><path d="M1 11c0-3 2-4 5-4s5 1 5 4z" fill="#8db9de" /></Ico></Slot>
        <Slot $w={54} $left $fs={8.6}>bim.phyo</Slot>
        <Slot $w={8}><Caret $ml={0} /></Slot>
        <Slot $w={20}><Ico stroke="#777"><path d="M0 2h2l2 6h6l1-4H3M4 10h1M9 10h1" /></Ico></Slot>
        <Slot $w={2}><Ico w={1} h={12} stroke="#bbb"><path d="M.5 0v12" /></Ico></Slot>
        <Slot $w={22}><Ico stroke="#666"><circle cx="6" cy="6" r="5.3" /><path d="M4.5 4.5a1.6 1.6 0 113 .6c-.5.6-1.5.8-1.5 2M6 9v.8" /></Ico></Slot>
        <Slot $w={2}><Caret $ml={0} /></Slot>
        <Slot $w={40} />
        <Slot $w={14}><Ico w={8} h={8} stroke="#444" sw="1.4"><path d="M1 7h6" /></Ico></Slot>
        <Slot $w={20}><Ico w={10} stroke="#444"><rect x="1" y="3.5" width="5.5" height="5.5" /><path d="M3.5 3.5V1H9v5H6.5" /></Ico></Slot>
        <Slot $w={14}><Ico w={10} stroke="#333" sw="1.6"><path d="M1 1l8 8M9 1l-8 8" /></Ico></Slot>
      </TitleBar>

      <TabBar>
        <FileTab>File</FileTab>
        {tabs.map((t, i) => <Tab key={t} $active={i === annotateAt} $wide={i > annotateAt}>{t}</Tab>)}
        <Slot $w={40}>
          <Ico w={12} h={8} stroke="#666"><rect x="1" y="1" width="10" height="6" rx="2" /><circle cx="6" cy="4" r="1" fill="#444" /></Ico>
          <Caret $ml={2} />
        </Slot>
      </TabBar>

      <Ribbon>
        <Panel $w={41}>
          <PanelBody>
            <ModifyButton>
              <Ico w={18} h={24} stroke="#5d6d78"><path d="M3 2v16l4-3 3 7 3-1-3-7h5z" fill="#eef6fa" /></Ico>
              <span>Modify</span>
            </ModifyButton>
          </PanelBody>
          <PanelLabel>Select<Caret /></PanelLabel>
        </Panel>
        <Panel $w={295}>
          <PanelBody $pl={2}>
            <Big w={32} icon="aligned">Aligned</Big>
            <Big w={32} icon="linear">Linear</Big>
            <Big w={32} icon="angular">Angular</Big>
            <Big w={34} icon="radial">Radial</Big>
            <Big w={38} icon="diameter">Diameter</Big>
            <Big w={35} icon="arc">Arc<br />Length</Big>
            <SmallCol $w={88}>
              <Tool icon="spotElev" label="Spot Elevation" />
              <Tool icon="spotCoord" label="Spot Coordinate" />
              <Tool icon="spotSlope" label="Spot Slope" />
            </SmallCol>
          </PanelBody>
          <PanelLabel $pr={10}>Dimension<Caret /></PanelLabel>
        </Panel>
        <Panel $w={163}>
          <PanelBody $pl={3}>
            <SmallCol $w={78}>
              <Tool icon="detailLine" label="Detail Line" />
              <Tool icon="region" label="Region" caret />
              <Tool icon="component" label="Component" caret />
            </SmallCol>
            <SmallCol $w={80}>
              <Tool icon="cloud" label="Revision Cloud" />
              <Tool icon="group" label="Detail Group" caret />
              <Tool icon="insulation" label="Insulation" />
            </SmallCol>
          </PanelBody>
          <PanelLabel>Detail</PanelLabel>
        </Panel>
        <Panel $w={85}>
          <PanelBody $pl={5}>
            <SmallCol $w={78}>
              <Tool icon="textA" label="Text" />
              <Tool icon="spelling" label="Check Spelling" />
              <Tool icon="find" label="Find/ Replace" />
            </SmallCol>
          </PanelBody>
          <PanelLabel $pr={8}>Text<Launcher /></PanelLabel>
        </Panel>
        <Panel $w={372}>
          <PanelBody $pl={5}>
            <Big w={36} icon="tagCat">Tag by<br />Category</Big>
            <Big w={30} icon="tagAll">Tag<br />All</Big>
            <SmallCol $w={97}>
              <Tool icon="beam" label="Beam Annotations" />
              <Tool icon="multi" label="Multi- Category" />
              <Tool icon="material" label="Material Tag" />
            </SmallCol>
            <SmallCol $w={64}>
              <Tool icon="area" label="Area Tag" off />
              <Tool icon="room" label="Room Tag" />
              <Tool icon="space" label="Space Tag" />
            </SmallCol>
            <SmallCol $w={84}>
              <Tool icon="view" label="View Reference" />
              <Tool icon="tread" label="Tread Number" />
              <Tool icon="rebar" label="Multi- Rebar" caret />
            </SmallCol>
            <Divider />
            <BigButton $w={50}>
              <BigIcon>{bigIcons.keynote}</BigIcon>
              Keynote
              <div><Caret $ml={0} /></div>
            </BigButton>
          </PanelBody>
          <PanelLabel $pr={8}>Tag<Caret /></PanelLabel>
        </Panel>
        <Panel $w={94}>
          <PanelBody $pl={3}>
            <SmallCol $w={88}>
              <Tool icon="duct" label="Duct Legend" />
              <Tool icon="pipe" label="Pipe Legend" />
              <Tool icon="colorFill" label="Color Fill Legend" tight />
            </SmallCol>
          </PanelBody>
          <PanelLabel>Color Fill</PanelLabel>
        </Panel>
        <Panel $w={206} $last>
          <PanelBody>
            <Big w={36} icon="symbol">Symbol</Big>
            <SmallCol $w={82}>
              <Tool icon="span" label="Span Direction" />
              <Tool icon="beamSym" label="Beam" />
              <Tool icon="stair" label="Stair Path" />
            </SmallCol>
            <SmallCol $w={44}>
              <Tool icon="areaSym" label="Area" />
              <Tool icon="path" label="Path" />
              <Tool icon="rebarSym" label="Rebar" />
            </SmallCol>
            <SmallCol $w={40}>
              <Tool icon="fabric" label="Fabric" />
            </SmallCol>
          </PanelBody>
          <PanelLabel>Symbol</PanelLabel>
        </Panel>
      </Ribbon>

      <Qat>
        {qat.map((q, idx) => {
          const ml = qatOffset(idx);
          if (q.sep) return <QatSep key={idx} $ml={ml} />;
          if (q.caret) return <QatItem key={idx} $w={5} $ml={ml}><Caret $ml={0} $color={q.caret} /></QatItem>;
          return <QatItem key={idx} $w={qatWidth(q)} $ml={ml} $active={q.active}>{q.i}</QatItem>;
        })}
      </Qat>
      <Band />

      <Main>
        <Properties>
          <PanelHeader>Properties<CloseX $mr={-1}>×</CloseX></PanelHeader>
          <TypeBox>
            <Thumb>
              <Ico w={22} h={24} stroke="#999"><rect x="1" y="1" width="13" height="18" /><rect x="7" y="5" width="14" height="18" fill="#f7f7f7" strokeDasharray="2 1" /></Ico>
            </Thumb>
            <TypeName>Floor Plan</TypeName>
            <Caret />
          </TypeBox>
          <SelectorRow>
            <SelectorField>Floor Plan: Level 0<Caret /></SelectorField>
            <EditType>
              <Ico w={11} stroke="#666"><rect x="1" y="1" width="5" height="4" /><rect x="1" y="6" width="4" height="4" /><rect x="6" y="3" width="4" height="7" /></Ico>
              Edit Type
            </EditType>
          </SelectorRow>
          <ListWrap>
            <PropList>
              {sections.map(s => (
                <React.Fragment key={s.title}>
                  <SectionRow>{s.title}<CollapseMark /></SectionRow>
                  {s.rows.map(([label, value, kind]) => (
                    <PropRow key={label} $off={kind === 'off'}>
                      <PropLabel>{label}</PropLabel>
                      <PropValueCell kind={kind} value={value} />
                    </PropRow>
                  ))}
                </React.Fragment>
              ))}
            </PropList>
            <PropScroll>
              <ScrollArrow><ArrowUp /></ScrollArrow>
              <PropThumb />
              <ScrollArrow $end><ArrowDown /></ScrollArrow>
            </PropScroll>
          </ListWrap>
          <PropFooter>
            <HelpLink>Properties help</HelpLink>
            <ApplyButton>Apply</ApplyButton>
          </PropFooter>
        </Properties>

        <ViewArea>
          <ViewTabs>
            <ViewTab>
              <Ico w={10} stroke="#777"><rect x="1" y="1" width="8" height="8" /></Ico>
              <span>Level 0</span>
              <CloseX $mr={0}>×</CloseX>
            </ViewTab>
            <TabCaretWrap><Caret $color="#888" /></TabCaretWrap>
          </ViewTabs>
          <CanvasRow>
            <Canvas>
              <PlanDrawing />
              <NavBar>
                <NavDots />
                <Ico w={18} h={18} stroke="#a9a9a9" sw="1.3">
                  <circle cx="8" cy="8" r="6.5" /><circle cx="8" cy="8" r="3" />
                  <text x="10" y="17" fontSize="6" fill="#4d7fb8" stroke="none" fontFamily="Liberation Sans, sans-serif">2D</text>
                </Ico>
                <Slot $w={10}><Caret $ml={0} $color="#777" /></Slot>
                <NavRule />
                <Ico w={16} h={15} stroke="#666"><rect x="1" y="1" width="9" height="9" fill="#a9c99a" stroke="none" /><circle cx="10" cy="10" r="2.5" /><path d="M12 12l3 2" /></Ico>
                <Slot $w={10}><Caret $ml={0} $color="#777" /></Slot>
                <NavDots $bottom />
              </NavBar>
            </Canvas>
            <VScroll>
              <ScrollArrow><ArrowUp /></ScrollArrow>
              <VThumb />
              <ScrollArrow $end><ArrowDown /></ScrollArrow>
            </VScroll>
          </CanvasRow>
          <ControlBar>
            <ScaleText>1 : 50</ScaleText>
            {viewBarIcons.map((icon, i) => <Slot key={i} $w={17.3}>{icon}</Slot>)}
            <Slot $w={10}><Ico w={5} h={7} stroke="#888"><path d="M4 1L1 3.5 4 6" /></Ico></Slot>
            <HScroll>
              <HThumb />
              <Ico w={5} h={7} stroke="#777"><path d="M1 1l3 2.5L1 6" /></Ico>
            </HScroll>
            <Slot $w={12}><Ico w={7} h={7} stroke="#999"><path d="M5.5 1v1M5.5 3.5v1M3 3.5v1M5.5 6v1M3 6v1M.5 6v1" /></Ico></Slot>
          </ControlBar>
        </ViewArea>

        <Browser>
          <PanelHeader>Project Browser - Project1<CloseX>×</CloseX></PanelHeader>
          <SearchBox>
            <Ico w={11} stroke="#777"><circle cx="4.5" cy="4.5" r="3.5" /><path d="M7 7l3 3" /></Ico>
            Search
          </SearchBox>
          <Tree>
            <TreeLines width="60" height="280">
              <path d="M9.5 9V162M9.5 20h3M9.5 73h3M9.5 87h3M9.5 100h3M9.5 167h3M16.5 26V60M16.5 34h19M16.5 47h19M16.5 60h19M16.5 107V153M16.5 113h19M16.5 127h19M16.5 140h19M16.5 153h19M8.5 200v7h17M8.5 240v3h17" stroke="#bcbcbc" strokeDasharray="1 1" fill="none" />
            </TreeLines>
            {treeRows.map(r => (
              <TreeRow key={r.label} $pad={r.pad} $hl={r.hl} $bold={r.bold}>
                {r.toggle && <Toggle>{r.toggle}</Toggle>}
                {r.icon && <TreeIcon>{r.icon}</TreeIcon>}
                {r.view && <TreeIcon $w={11} $mr={3}>{treeViewIcon}</TreeIcon>}
                {r.label}
              </TreeRow>
            ))}
          </Tree>
          <ThumbsUp width="44" height="38" viewBox="0 0 44 38">
            <rect x="0" y="14" width="7.5" height="23" rx="2" fill="#cc1030" />
            <path d="M13 37V15l8-9q3-6 6-6 3 1 2 6l-2 6h13q3 1 2 5l-4 17q-1 3-4 3H15q-2 0-2 0z" fill="#cc1030" />
          </ThumbsUp>
          <Subscribe>
            <SubscribeLabel>SUBSCRIBE</SubscribeLabel>
            <SubscribePlus>
              <Ico w={20} stroke="#999" sw="3"><path d="M10 1v18M1 10h18" /></Ico>
            </SubscribePlus>
          </Subscribe>
        </Browser>
      </Main>

      <StatusBar>
        <Slot $w={580} $left>Detail Items : Masking Region : Masking Region</Slot>
        <Slot $w={12}><Ico stroke="none"><circle cx="6" cy="6" r="5" fill="#5bb99a" /><rect x="6" y="1" width="3" height="4" fill="#b56a4a" /></Ico></Slot>
        <Slot $w={134} />
        <Slot $w={10}><Caret $ml={0} $color="#bbb" /></Slot>
        <Slot $w={14}><Ico w={11} stroke="#bbb"><rect x="5" y="1" width="5" height="3" /><rect x="1" y="6" width="4" height="4" /></Ico></Slot>
        <Slot $w={20} $left $color="#bbb">:0</Slot>
        <Slot $w={16}><Ico w={11} stroke="#777"><rect x="1" y="1" width="9" height="9" fill="#bbb" /><rect x="1" y="1" width="9" height="2" fill="#555" /></Ico></Slot>
        <Slot $w={23}><Ico w={11} stroke="#aaa"><path d="M2 1h8v7H2zM1 10h9M4 3h4M4 5h4" /></Ico></Slot>
        <Slot $w={125} $left $color="#b5b5b5" $fs={9.8}>Main Model</Slot>
        <Slot $w={10}><Caret $ml={0} $color="#ccc" /></Slot>
        <Slot $w={163} />
        {selectIcons.map((icon, i) => <Slot key={i} $w={17.3}>{icon}</Slot>)}
        <Slot $w={12}><Ico w={11} stroke="#777"><path d="M1 1h9L6.5 6v4l-2-1V6z" /></Ico></Slot>
        <Slot $w={14} $left>:0</Slot>
      </StatusBar>
      <BlackBar />
    </Page>
  );
}
